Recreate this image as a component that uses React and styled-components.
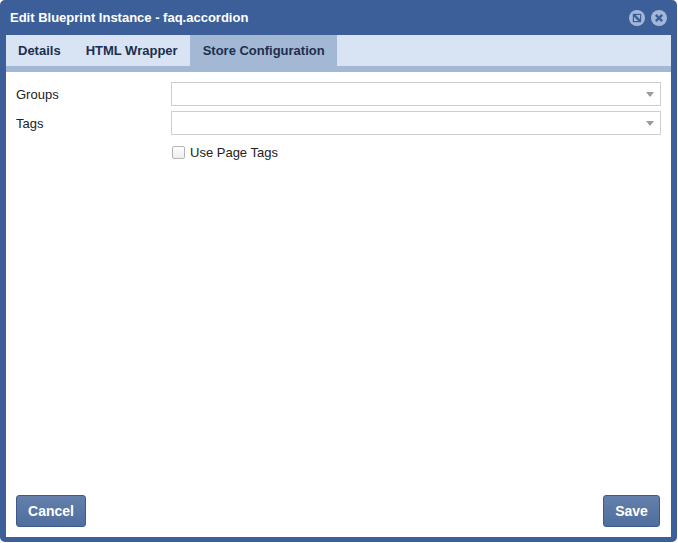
import React from "react"
import styled, { createGlobalStyle } from "styled-components"

const GlobalStyle = createGlobalStyle`
    html, body {
        margin: 0;
        padding: 0;
        background: #ffffff;
    }
    body {
        font-family: "Liberation Sans", Arial, sans-serif;
    }
`;

const Modal = styled.div`
    width: 677px;
    height: 542px;
    box-sizing: border-box;
    background: #3c5f99;
    border-radius: 5px;
    padding: 0 6px 5px 6px;
    display: flex;
    flex-direction: column;
`;

const TitleBar = styled.div`
    height: 35px;
    flex-shrink: 0;
    display: flex;
    align-items: center;
    justify-content: space-between;
    padding: 0 4px 0 4px;
`;

const Title = styled.span`
    font-size: 13px;
    font-weight: bold;
    color: #ffffff;
`;

const TitleIcons = styled.div`
    display: flex;
    gap: 6px;
`;

const TabBar = styled.div`
    height: 31px;
    flex-shrink: 0;
    display: flex;
    background: #d8e4f3;
    border-bottom: 6px solid #a3b8d4;
`;

const Tab = styled.div`
    padding: 0 12.5px;
    display: flex;
    align-items: center;
    font-size: 13px;
    font-weight: bold;
    color: #1c2f50;
    background: ${(props) => (props.$active ? "#a3b8d4" : "transparent")};
    &:first-child {
        padding-left: 12px;
    }
`;

const Body = styled.div`
    flex: 1;
    background: #ffffff;
    display: flex;
    flex-direction: column;
    padding: 10px 10px 10px 10px;
`;

const Form = styled.div`
    flex: 1;
    display: flex;
    flex-direction: column;
    gap: 5px;
`;

const Row = styled.div`
    display: flex;
    align-items: center;
    height: 24px;
`;

const Label = styled.label`
    width: 155px;
    flex-shrink: 0;
    font-size: 13px;
    color: #222222;
`;

const Select = styled.div`
    flex: 1;
    height: 24px;
    box-sizing: border-box;
    border: 1px solid #cfcfcf;
    display: flex;
    align-items: center;
    justify-content: flex-end;
    padding-right: 6px;
`;

const Caret = styled.span`
    width: 0;
    height: 0;
    border-left: 4px solid transparent;
    border-right: 4px solid transparent;
    border-top: 5px solid #9b9b9b;
`;

const CheckRow = styled.div`
    display: flex;
    align-items: center;
    gap: 5px;
    margin: 5px 0 0 156px;
    font-size: 13px;
    color: #222222;
`;

const Checkbox = styled.span`
    width: 13px;
    height: 13px;
    box-sizing: border-box;
    border: 1px solid #b5b5b5;
    border-radius: 2px;
    background: linear-gradient(#ffffff, #eeeeee);
`;

const Footer = styled.div`
    display: flex;
    justify-content: space-between;
    padding-right: 1px;
`;

const Button = styled.button`
    width: ${(props) => props.$width}px;
    height: 32px;
    border: 1px solid #3d5a88;
    border-radius: 3px;
    background: linear-gradient(#647fab, #4f6e9f);
    color: #ffffff;
    font-family: inherit;
    font-size: 14px;
    font-weight: bold;
    padding: 0;
`;

function BlockIcon() {
    return (
        <svg width="16" height="16" viewBox="0 0 16 16">
            <circle cx="8" cy="8" r="8" fill="#a3b8d9" />
            <path d="M3.8 5.6 L5.6 3.8 L12.2 10.4 L10.4 12.2 Z" fill="#3c5f99" />
            <rect x="4.4" y="4.4" width="7.2" height="7.2" fill="none" stroke="#3c5f99" strokeWidth="1.2" />
        </svg>
    );
}

function CloseIcon() {
    return (
        <svg width="16" height="16" viewBox="0 0 16 16">
            <circle cx="8" cy="8" r="8" fill="#a3b8d9" />
            <path d="M4.8 4.8 L11.2 11.2 M11.2 4.8 L4.8 11.2" stroke="#3c5f99" strokeWidth="2.4" />
        </svg>
    );
}

export default function App() {
    return (
        <>
            <GlobalStyle />
            <Modal>
                <TitleBar>
                    <Title>Edit Blueprint Instance - faq.accordion</Title>
                    <TitleIcons>
                        <BlockIcon />
                        <CloseIcon />
                    </TitleIcons>
                </TitleBar>
                <TabBar>
                    <Tab>Details</Tab>
                    <Tab>HTML Wrapper</Tab>
                    <Tab $active>Store Configuration</Tab>
                </TabBar>
                <Body>
                    <Form>
                        <Row>
                            <Label>Groups</Label>
                            <Select><Caret /></Select>
                        </Row>
                        <Row>
                            <Label>Tags</Label>
                            <Select><Caret /></Select>
                        </Row>
                        <CheckRow>
                            <Checkbox />
                            Use Page Tags
                        </CheckRow>
                    </Form>
                    <Footer>
                        <Button $width={70}>Cancel</Button>
                        <Button $width={57}>Save</Button>
                    </Footer>
                </Body>
            </Modal>
        </>
    );
}
